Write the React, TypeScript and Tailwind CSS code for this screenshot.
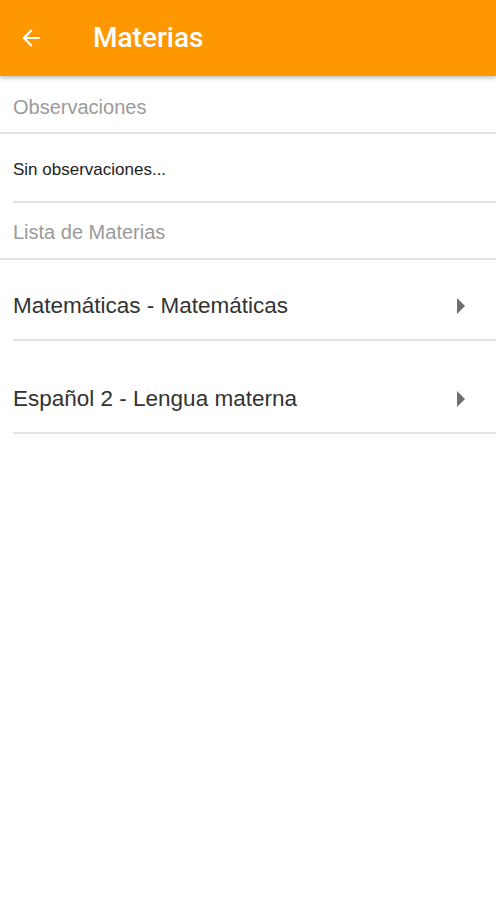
import React from "react";

function Tri() {
  return (
    <svg width="10" height="16" viewBox="0 0 10 16" className="shrink-0">
      <path d="M1 0 L9 8 L1 16 Z" fill="#6f6f6f" />
    </svg>
  );
}

export default function App() {
  return (
    <div className="w-[496px] h-[900px] bg-white overflow-hidden" style={{ fontFamily: "'Liberation Sans', Arial, sans-serif" }}>
      <header className="relative z-10 h-[76px] bg-[#ff9800] flex items-center shadow-[0_2px_4px_rgba(0,0,0,0.25)]">
        <div className="w-[93px] pl-[18px] flex items-center">
          <svg width="26" height="26" viewBox="0 0 24 24">
            <path d="M20 11H7.83l5.59-5.59L12 4l-8 8 8 8 1.41-1.41L7.83 13H20v-2z" fill="#fff" />
          </svg>
        </div>
        <h1 className="text-white leading-none" style={{ fontFamily: "Roboto, 'Liberation Sans', sans-serif", fontWeight: 500, fontSize: "28px" }}>Materias</h1>
      </header>
      <div className="h-[58px] pt-[6px] flex items-center pl-[13px] border-b-2 border-[#e4e4e4] text-[#9a9a9a] text-[20px]">
        Observaciones
      </div>
      <div className="pl-[13px]">
        <div className="h-[69px] pt-[5px] flex items-center border-b-2 border-[#e4e4e4] text-[#222] text-[17px]">
          Sin observaciones...
        </div>
      </div>
      <div className="h-[57px] pt-[3px] flex items-center pl-[13px] border-b-2 border-[#e4e4e4] text-[#9a9a9a] text-[20px]">
        Lista de Materias
      </div>
      <div className="pl-[13px]">
        <div className="h-[81px] pt-[13px] flex items-center border-b-2 border-[#e4e4e4] text-[#333] text-[22.5px]">
          <span className="flex-1">Matemáticas - Matemáticas</span>
          <span className="pr-[30px]"><Tri /></span>
        </div>
        <div className="h-[93px] pt-[24px] flex items-center border-b-2 border-[#e4e4e4] text-[#333] text-[22.5px]">
          <span className="flex-1">Español 2 - Lengua materna</span>
          <span className="pr-[30px]"><Tri /></span>
        </div>
      </div>
    </div>
  );
}
